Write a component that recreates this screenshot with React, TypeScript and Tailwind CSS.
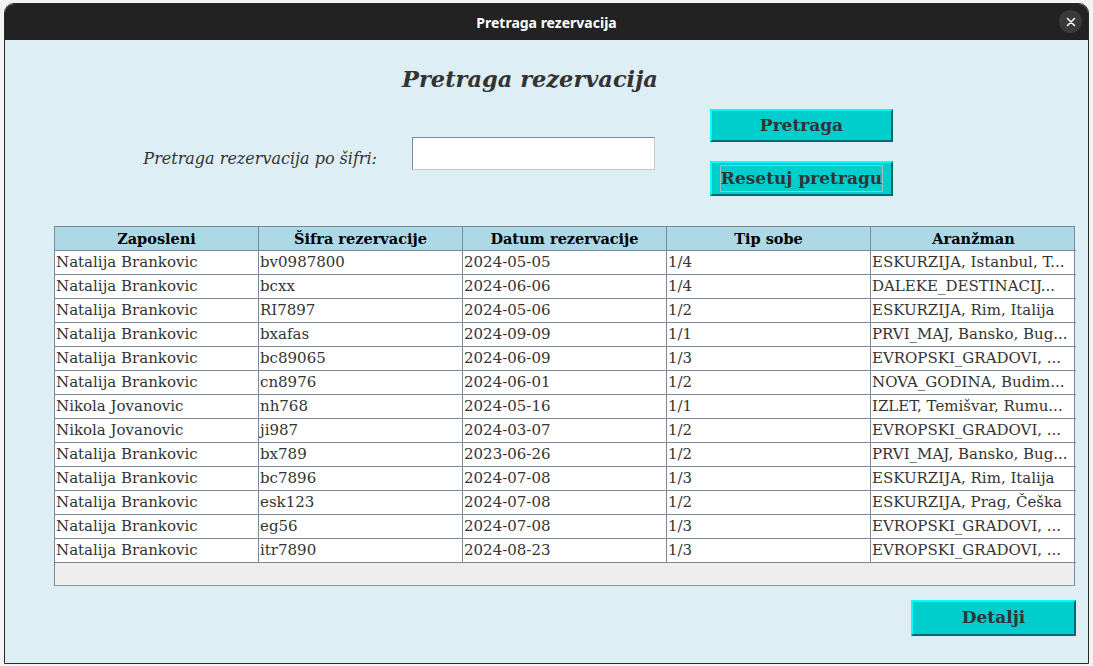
import React from 'react';

const rows: string[][] = [
  ['Natalija Brankovic', 'bv0987800', '2024-05-05', '1/4', 'ESKURZIJA, Istanbul, T...'],
  ['Natalija Brankovic', 'bcxx', '2024-06-06', '1/4', 'DALEKE_DESTINACIJ...'],
  ['Natalija Brankovic', 'RI7897', '2024-05-06', '1/2', 'ESKURZIJA, Rim, Italija'],
  ['Natalija Brankovic', 'bxafas', '2024-09-09', '1/1', 'PRVI_MAJ, Bansko, Bug...'],
  ['Natalija Brankovic', 'bc89065', '2024-06-09', '1/3', 'EVROPSKI_GRADOVI, ...'],
  ['Natalija Brankovic', 'cn8976', '2024-06-01', '1/2', 'NOVA_GODINA, Budim...'],
  ['Nikola Jovanovic', 'nh768', '2024-05-16', '1/1', 'IZLET, Temišvar, Rumu...'],
  ['Nikola Jovanovic', 'ji987', '2024-03-07', '1/2', 'EVROPSKI_GRADOVI, ...'],
  ['Natalija Brankovic', 'bx789', '2023-06-26', '1/2', 'PRVI_MAJ, Bansko, Bug...'],
  ['Natalija Brankovic', 'bc7896', '2024-07-08', '1/3', 'ESKURZIJA, Rim, Italija'],
  ['Natalija Brankovic', 'esk123', '2024-07-08', '1/2', 'ESKURZIJA, Prag, Češka'],
  ['Natalija Brankovic', 'eg56', '2024-07-08', '1/3', 'EVROPSKI_GRADOVI, ...'],
  ['Natalija Brankovic', 'itr7890', '2024-08-23', '1/3', 'EVROPSKI_GRADOVI, ...'],
];

const headers = ['Zaposleni', 'Šifra rezervacije', 'Datum rezervacije', 'Tip sobe', 'Aranžman'];

const serif = "font-['DejaVu_Serif','Liberation_Serif',serif]";

const CyanButton = ({ label, className, focused }: { label: string; className: string; focused?: boolean }) => (
  <button
    className={`${className} flex items-center justify-center bg-[#00cecd] border-2 border-t-[#00ffff] border-l-[#00ffff] border-b-[#006c6c] border-r-[#006c6c] text-[#333333] font-bold text-[17px] ${serif}`}
  >
    <span className={focused ? 'border border-[#a9bcc6] leading-[25px]' : ''}>{label}</span>
  </button>
);

export default function App() {
  return (
    <div className="w-[1093px] h-[666px] bg-[#f3f3f3] overflow-hidden">
      <div className="ml-[4px] mt-[3px] w-[1085px] h-[661px] border border-[#2a2a2a] rounded-t-[10px] overflow-hidden flex flex-col bg-[#deeef5]">
        {/* title bar */}
        <div className="h-[36px] bg-[#222222] flex items-center justify-center relative shrink-0">
          <span className="text-white font-bold text-[14px] font-['Noto_Sans',sans-serif]">Pretraga rezervacija</span>
          <div className="absolute right-[6px] top-[6px] w-[23px] h-[23px] rounded-full bg-[#3a3a3a] flex items-center justify-center">
            <svg width="10" height="10" viewBox="0 0 10 10">
              <path d="M1.5 1.5 L8.5 8.5 M8.5 1.5 L1.5 8.5" stroke="#ffffff" strokeWidth="1.5" strokeLinecap="round" />
            </svg>
          </div>
        </div>

        {/* content */}
        <div className="flex flex-col">
          <h1 className={`mt-[24px] h-[30px] leading-[30px] text-center pr-[33px] text-[22.5px] font-bold italic text-[#333333] ${serif}`}>
            Pretraga rezervacija
          </h1>

          <div className="mt-[15px] flex items-start">
            <div className={`w-[372px] mt-[40px] text-right italic text-[16px] text-[#333333] leading-[20px] ${serif}`}>
              Pretraga rezervacija po šifri:
            </div>
            <input className="ml-[35px] mt-[28px] w-[243px] h-[33px] bg-white border border-[#7a8a99] border-b-[#c0c8d0] border-r-[#c0c8d0] outline-none" />
            <div className="ml-[55px] flex flex-col">
              <CyanButton label="Pretraga" className="w-[183px] h-[33px]" />
              <CyanButton label="Resetuj pretragu" className="w-[183px] h-[35px] mt-[19px]" focused />
            </div>
          </div>

          <div className={`mt-[30px] ml-[49px] w-[1021px] border-l border-t border-r border-[#7a8899] ${serif}`}>
            <div className="grid grid-cols-[204px_204px_204px_204px_205px] bg-[#add8e6]">
              {headers.map((h, i) => (
                <div
                  key={h}
                  className={`h-[24px] flex items-center justify-center font-bold text-[14.5px] text-black border-b border-[#7a8899] ${i < 4 ? 'border-r' : ''}`}
                >
                  {h}
                </div>
              ))}
            </div>
            {rows.map((r, ri) => (
              <div key={ri} className="grid grid-cols-[204px_204px_204px_204px_205px] bg-white">
                {r.map((c, ci) => (
                  <div
                    key={ci}
                    className={`h-[24px] flex items-center pl-[1px] text-[15px] text-[#333333] whitespace-nowrap overflow-hidden border-b border-[#7a8899] ${ci < 4 ? 'border-r' : ''}`}
                  >
                    {c}
                  </div>
                ))}
              </div>
            ))}
            <div className="h-[23px] bg-[#eeeeee] border-b border-[#8896a4]" />
          </div>

          <div className="mt-[14px] flex justify-end pr-[12px]">
            <CyanButton label="Detalji" className="w-[165px] h-[36px]" />
          </div>
        </div>
      </div>
    </div>
  );
}
